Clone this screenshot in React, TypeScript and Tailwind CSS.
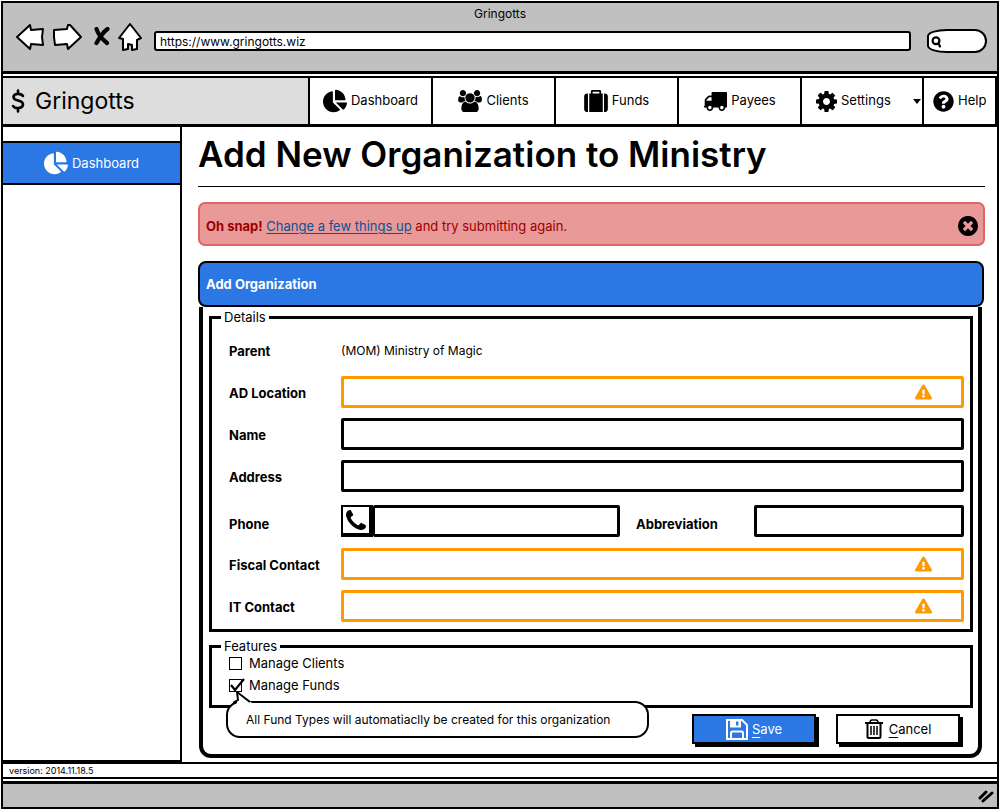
import type { ReactNode } from "react";
import { FaChartPie, FaExclamationTriangle, FaQuestionCircle } from "react-icons/fa";

type IconProps = { className?: string };

const UsersIcon = ({ className }: IconProps) => (
  <svg viewBox="0 0 1920 1792" fill="currentColor" className={className} aria-hidden="true">
    <path d="M593 896q-162 5-265 128h-134q-82 0-138-40.5t-56-118.5q0-353 124-353 6 0 43.5 21t97.5 42.5 119 21.5q67 0 133-23-5 37-5 66 0 159 93 288zm1071 637q0 120-73 189.5t-194 69.5h-874q-121 0-194-69.5t-73-189.5q0-53 3.5-103.5t14-109 26.5-108.5 43-97.5 62-81 85.5-53.5 111.5-20q10 0 43 21.5t73 48 107 48 135 21.5 135-21.5 107-48 73-48 43-21.5q61 0 111.5 20t85.5 53.5 62 81 43 97.5 26.5 108.5 14 109 3.5 103.5zm-1024-1277q0 106-75 181t-181 75-181-75-75-181 75-181 181-75 181 75 75 181zm704 384q0 159-112.5 271.5t-271.5 112.5-271.5-112.5-112.5-271.5 112.5-271.5 271.5-112.5 271.5 112.5 112.5 271.5zm576 225q0 78-56 118.5t-138 40.5h-134q-103-123-265-128 93-129 93-288 0-29-5-66 66 23 133 23 59 0 119-21.5t97.5-42.5 43.5-21q124 0 124 353zm-128-609q0 106-75 181t-181 75-181-75-75-181 75-181 181-75 181 75 75 181z" />
  </svg>
);

const SuitcaseIcon = ({ className }: IconProps) => (
  <svg viewBox="0 0 1792 1664" fill="currentColor" className={className} aria-hidden="true">
    <path d="M640 256h512v-128h-512v128zm-352 0v1408h-64q-92 0-158-66t-66-158v-960q0-92 66-158t158-66h64zm1120 0v1408h-1024v-1408h128v-160q0-40 28-68t68-28h576q40 0 68 28t28 68v160h128zm384 224v960q0 92-66 158t-158 66h-64v-1408h64q92 0 158 66t66 158z" />
  </svg>
);

const TruckIcon = ({ className }: IconProps) => (
  <svg viewBox="0 256 1792 1408" fill="currentColor" className={className} aria-hidden="true">
    <path d="M640 1408q0-52-38-90t-90-38-90 38-38 90 38 90 90 38 90-38 38-90zm-384-512h384v-256h-158q-13 0-22 9l-195 195q-9 9-9 22v30zm1280 512q0-52-38-90t-90-38-90 38-38 90 38 90 90 38 90-38 38-90zm256-1088v1024q0 15-4 26.5t-13.5 18.5-16.5 11.5-23.5 6-22.5 2-25.5 0-22.5-.5q0 106-75 181t-181 75-181-75-75-181h-384q0 106-75 181t-181 75-181-75-75-181h-64q-3 0-22.5.5t-25.5 0-22.5-2-23.5-6-16.5-11.5-13.5-18.5-4-26.5q0-26 19-45t45-19v-320q0-8-.5-35t0-38 2.5-34.5 6.5-37 14-30.5 22.5-30l198-198q19-19 50.5-32t58.5-13h160v-192q0-26 19-45t45-19h1024q26 0 45 19t19 45z" />
  </svg>
);

const CogIcon = ({ className }: IconProps) => (
  <svg viewBox="128 128 1536 1536" fill="currentColor" className={className} aria-hidden="true">
    <path d="M1152 896q0-106-75-181t-181-75-181 75-75 181 75 181 181 75 181-75 75-181zm512-109v222q0 12-8 23t-20 13l-185 28q-19 54-39 91 35 50 107 138 10 12 10 25t-9 23q-27 37-99 108t-94 71q-12 0-26-9l-138-108q-44 23-91 38-16 136-29 186-7 28-36 28h-222q-14 0-24.5-8.5t-11.5-21.5l-28-184q-49-16-90-37l-141 107q-10 9-25 9-14 0-25-11-126-114-165-168-7-10-7-23 0-12 8-23 15-21 51-66.5t54-70.5q-27-50-41-99l-183-27q-13-2-21-12.5t-8-23.5v-222q0-12 8-23t19-13l186-28q14-46 39-92-40-57-107-138-10-12-10-24 0-10 9-23 26-36 98.5-107.5t94.5-71.5q13 0 26 10l138 107q44-23 91-38 16-136 29-186 7-28 36-28h222q14 0 24.5 8.5t11.5 21.5l28 184q49 16 90 37l142-107q9-9 24-9 13 0 25 10 129 119 165 170 7 8 7 22 0 12-8 23-15 21-51 66.5t-54 70.5q26 50 41 98l183 28q13 2 21 12.5t8 23.5z" />
  </svg>
);

const CloseIcon = ({ className }: IconProps) => (
  <svg viewBox="128 128 1536 1536" fill="currentColor" className={className} aria-hidden="true">
    <path d="M1277 1122q0-26-19-45l-181-181 181-181q19-19 19-45 0-27-19-46l-90-90q-19-19-46-19-26 0-45 19l-181 181-181-181q-19-19-45-19-27 0-46 19l-90 90q-19 19-19 46 0 26 19 45l181 181-181 181q-19 19-19 45 0 27 19 46l90 90q19 19 46 19 26 0 45-19l181-181 181 181q19 19 45 19 27 0 46-19l90-90q19-19 19-46zm387-226q0 209-103 385.5t-279.5 279.5-385.5 103-385.5-103-279.5-279.5-103-385.5 103-385.5 279.5-279.5 385.5-103 385.5 103 279.5 279.5 103 385.5z" />
  </svg>
);

const PhoneIcon = ({ className }: IconProps) => (
  <svg viewBox="0 0 1408 1408" fill="currentColor" className={className} aria-hidden="true">
    <path d="M1408 1112q0 27-10 70.5t-21 68.5q-21 50-122 106-94 51-186 51-27 0-52.5-3.5t-57.5-12.5-47.5-14.5-55.5-20.5-49-18q-98-35-175-83-128-79-264.5-215.5t-215.5-264.5q-48-77-83-175-3-9-18-49t-20.5-55.5-14.5-47.5-12.5-57.5-3.5-52.5q0-92 51-186 56-101 106-122 25-11 68.5-21t70.5-10q14 0 21 3 18 6 53 76 11 19 30 54t35 63.5 31 53.5q3 4 17.5 25t21.5 35.5 7 28.5q0 20-28.5 50t-62 55-62 53-28.5 46q0 9 5 22.5t8.5 20.5 14 24 11.5 19q76 137 174 235t235 174q2 1 19 11.5t24 14 20.5 8.5 22.5 5q18 0 46-28.5t53-62 55-62 50-28.5q14 0 28.5 7t35.5 21.5 25 17.5q25 15 53.5 31t63.5 35 54 30q70 35 76 53 3 7 3 21z" />
  </svg>
);

const SaveIcon = ({ className }: IconProps) => (
  <svg viewBox="0 0 22 21" fill="none" stroke="currentColor" strokeWidth="2" className={className} aria-hidden="true">
    <path d="M1 1H16L21 6V20H1Z" />
    <path d="M5 20V14Q5 12.500 6.500 12.500H15.500Q17 12.500 17 14V20" />
    <path d="M4 1V8.500H15V1Z" fill="currentColor" stroke="none" />
    <path d="M10 2.500H12.500V6.500H10Z" fill="#2b78e4" stroke="none" />
  </svg>
);

const TrashIcon = ({ className }: IconProps) => (
  <svg viewBox="0 0 18 20" fill="none" stroke="currentColor" strokeWidth="2" strokeLinejoin="round" className={className} aria-hidden="true">
    <path d="M0 4H18" />
    <path d="M5 4C5 2 6 1 7 1H11C12 1 13 2 13 4" strokeWidth="1.600" />
    <path d="M2.500 4V17.500Q2.500 19 4 19H14Q15.500 19 15.500 17.500V4" />
    <path d="M6 7V16M9 7V16M12 7V16" strokeWidth="1.500" />
  </svg>
);

const BrowserButton = ({ label, children }: { label: string; children: ReactNode }) => (
  <button type="button" aria-label={label} className="flex items-center">
    {children}
  </button>
);

const NavItem = ({ icon, children }: { icon: ReactNode; children: ReactNode }) => (
  <a href="#" className="flex w-[123px] items-center justify-center gap-1 border-l-2 border-black bg-white">
    {icon}
    <span className="pb-[2px]">{children}</span>
  </a>
);

const FieldLabel = ({ id, children }: { id: string; children: ReactNode }) => (
  <label htmlFor={id} className="w-28 shrink-0 pt-[2px] font-bold">
    {children}
  </label>
);

const Field = ({ id, label, warn }: { id: string; label: string; warn?: boolean }) => (
  <div className="flex items-center">
    <FieldLabel id={id}>{label}</FieldLabel>
    {warn ? (
      <div className="relative flex flex-1">
        <input id={id} type="text" className="h-8 w-full rounded-[2px] border-[3px] border-[#ff9900] bg-white px-2 outline-none" />
        <FaExclamationTriangle className="absolute top-2 right-8 h-4 w-[17px] text-[#ff9900]" aria-hidden="true" />
      </div>
    ) : (
      <input id={id} type="text" className="h-8 min-w-0 flex-1 rounded-[2px] border-[3px] border-black bg-white px-2 outline-none" />
    )}
  </div>
);

const Check = ({ id, label, checked }: { id: string; label: string; checked?: boolean }) => (
  <div className="flex h-4 items-center gap-[7px]">
    <span className="relative flex">
      <input id={id} type="checkbox" defaultChecked={checked} className="peer size-[13px] appearance-none border border-black bg-white" />
      <svg viewBox="0 0 15 14" className="pointer-events-none absolute top-[-1px] left-px hidden h-3.5 w-[15px] peer-checked:block" fill="none" stroke="black" strokeWidth="2.200" aria-hidden="true">
        <path d="M1 7L5 12L14 1" />
      </svg>
    </span>
    <label htmlFor={id}>{label}</label>
  </div>
);

export default function App() {
  return (
    <div className="flex min-h-screen flex-col bg-white p-px font-['Inter','Liberation_Sans',sans-serif] text-[13px] leading-4 text-black">
      <div className="flex flex-1 flex-col border-2 border-black">
        <header className="border-b-[3px] border-black bg-[#c0c0c0] pb-5">
          <div className="pt-[3px] text-center text-xs">Gringotts</div>
          <div className="mt-px flex h-7 items-center pr-2.5 pl-[13px]">
            <BrowserButton label="Back">
              <svg viewBox="0 0 28 26" className="h-[26px] w-7" fill="white" stroke="black" strokeWidth="2" strokeLinejoin="round">
                <path d="M1 13L14 1L15 6L27 5L26 13L27 21L15 20L14 25Z" />
              </svg>
            </BrowserButton>
            <span className="w-2" />
            <BrowserButton label="Forward">
              <svg viewBox="0 0 30 28" className="h-7 w-[30px]" fill="white" stroke="black" strokeWidth="2" strokeLinejoin="round">
                <path d="M2 7L15 6L16 2L18 2L29 14L16 26L15 21L3 22L2 14Z" />
              </svg>
            </BrowserButton>
            <span className="w-[11px]" />
            <BrowserButton label="Stop">
              <svg viewBox="0 0 18 20" className="h-5 w-[18px]" fill="none" stroke="black" strokeWidth="4.200" strokeLinecap="round">
                <path d="M3.500 2C5 7 9 12 14 16M14.500 2C9 6 7 10 3.500 16" />
              </svg>
            </BrowserButton>
            <span className="w-[7px]" />
            <BrowserButton label="Home">
              <svg viewBox="0 0 24 28" className="h-7 w-6" fill="white" stroke="black" strokeWidth="2" strokeLinejoin="round">
                <path d="M12 1L23 15L19 17L19 26L14 27L14 22L10 21L10 26L5 27L5 16L1 15Z" />
              </svg>
            </BrowserButton>
            <input
              type="text"
              aria-label="Address"
              defaultValue="https://www.gringotts.wiz"
              className="mt-2 ml-3 h-5 min-w-0 flex-1 rounded-[3px] border-2 border-black bg-white px-1 text-xs outline-none"
            />
            <div className="relative mt-2 ml-4 flex w-[60px]">
              <input type="search" aria-label="Search" className="h-6 w-full rounded-[50%/45%] rounded-r-[18px] border-2 border-black bg-white pl-5 outline-none" />
              <svg viewBox="0 0 12 12" className="pointer-events-none absolute top-[7px] left-1 size-3" fill="none" stroke="black" strokeWidth="2.200" strokeLinecap="round" aria-hidden="true">
                <circle cx="5" cy="4.800" r="3.400" />
                <path d="M7.500 7.500L9 10.500" />
              </svg>
            </div>
          </div>
        </header>

        <nav className="mt-[2px] flex h-[51px] border-t-2 border-b-[3px] border-black">
          <div className="flex flex-1 items-center gap-2.5 bg-[#dddddd] pb-px pl-2">
            <svg viewBox="0 0 14 24" className="h-6 w-3.5" fill="none" stroke="black" strokeWidth="2.600" strokeLinecap="round" aria-hidden="true">
              <path d="M12 7C10 4 3 4 2.500 8C2.500 13 12 10 12 15.500C11.500 20 4 20 2 17M7 1.500V4.500M7 19V22.500" />
            </svg>
            <span className="text-[23px] leading-7">Gringotts</span>
          </div>
          <NavItem icon={<FaChartPie className="size-6" />}>Dashboard</NavItem>
          <NavItem icon={<UsersIcon className="h-[22px] w-6" />}>Clients</NavItem>
          <NavItem icon={<SuitcaseIcon className="h-[22px] w-6" />}>Funds</NavItem>
          <NavItem icon={<TruckIcon className="h-[19px] w-6" />}>Payees</NavItem>
          <a href="#" className="flex w-[122px] items-center border-l-2 border-black bg-white pr-px pl-3.5">
            <CogIcon className="size-[21px]" />
            <span className="ml-1 flex-1 pb-[2px]">Settings</span>
            <svg viewBox="0 0 8 5" className="h-[5px] w-2" aria-hidden="true">
              <path d="M0 0H8L4 5Z" />
            </svg>
          </a>
          <a href="#" className="flex w-[75px] items-center gap-1 border-r-2 border-l-2 border-black bg-white pl-[9px]">
            <FaQuestionCircle className="size-[21px]" />
            <span className="pb-[2px]">Help</span>
          </a>
        </nav>

        <div className="flex flex-1">
          <aside className="flex w-[179px] shrink-0 flex-col border-r-2 border-b-2 border-black pt-3.5">
            <a href="#" className="flex h-11 items-center justify-center gap-1 border-y-2 border-black bg-[#2b78e4] pb-px text-white">
              <FaChartPie className="size-6" />
              Dashboard
            </a>
          </aside>

          <main className="flex min-w-0 flex-1 flex-col pr-3 pb-1 pl-4">
            <h1 className="border-b border-black pt-[7px] pb-3 text-[35px] leading-10 font-semibold">Add New Organization to Ministry</h1>

            <div role="alert" className="mt-[15px] flex h-11 items-center rounded-[7px] border-2 border-[#e06666] bg-[#ea9999] pt-1 pr-[5px] pl-1.5 text-[#990000]">
              <p className="flex-1">
                <strong>Oh snap!</strong>{" "}
                <a href="#" className="text-[#0b5394] underline underline-offset-2">
                  Change a few things up
                </a>{" "}
                and try submitting again.
              </p>
              <button type="button" aria-label="Dismiss" className="text-black">
                <CloseIcon className="size-5" />
              </button>
            </div>

            <form className="mt-[15px] mr-px flex flex-1 flex-col">
              <h2 className="flex h-[46px] items-center rounded-lg border-2 border-black bg-[#2b78e4] pl-1.5 font-bold text-white">Add Organization</h2>

              <div className="mr-[2px] ml-px flex flex-1 flex-col rounded-b-xl border-x-4 border-b-4 border-black pt-[2px] pr-[5px] pb-1 pl-1.5">
                <fieldset className="border-[3px] border-black pr-1.5 pb-[7px] pl-[17px]">
                  <legend className="-ml-2 px-[3px]">Details</legend>
                  <div className="flex items-center pt-[18px] pb-[17px]">
                    <span className="w-28 font-bold">Parent</span>
                    <span className="text-xs">(MOM) Ministry of Magic</span>
                  </div>
                  <div className="flex flex-col gap-2.5">
                    <Field id="ad-location" label="AD Location" warn />
                    <Field id="name" label="Name" />
                    <Field id="address" label="Address" />
                    <div className="mt-[3px] mb-px flex items-center">
                      <label htmlFor="phone" className="w-28 shrink-0 pt-1.5 font-bold">
                        Phone
                      </label>
                      <button type="button" aria-label="Call" className="flex h-8 w-8 items-center justify-center border-2 border-r-4 border-b-4 border-black bg-white">
                        <PhoneIcon className="size-5" />
                      </button>
                      <input id="phone" type="tel" className="h-8 min-w-0 flex-1 rounded-[2px] border-[3px] border-l-2 border-black bg-white px-2 outline-none" />
                      <label htmlFor="abbreviation" className="w-[134px] shrink-0 pt-1.5 pl-4 font-bold">
                        Abbreviation
                      </label>
                      <input id="abbreviation" type="text" className="h-8 w-[210px] rounded-[2px] border-[3px] border-black bg-white px-2 outline-none" />
                    </div>
                    <Field id="fiscal-contact" label="Fiscal Contact" warn />
                    <Field id="it-contact" label="IT Contact" warn />
                  </div>
                </fieldset>

                <fieldset className="relative mt-1.5 border-[3px] border-black pb-3 pl-[17px]">
                  <legend className="-ml-2 px-[3px]">Features</legend>
                  <div className="flex flex-col gap-1.5 pt-px">
                    <Check id="manage-clients" label="Manage Clients" />
                    <Check id="manage-funds" label="Manage Funds" checked />
                  </div>
                  <div role="tooltip" className="absolute top-full left-3.5 -mt-1 flex h-[37px] w-[423px] items-center rounded-[14px] border-2 border-black bg-white pl-[18px] text-xs whitespace-nowrap">
                    All Fund Types will automatiaclly be created for this organization
                    <svg viewBox="0 0 24 13" className="absolute -top-[12px] left-[5px] h-[13px] w-6" aria-hidden="true">
                      <path d="M4 12L5 1L19 12V13H3Z" fill="white" />
                      <path d="M0 12L5 9L4 1L17 11" fill="none" stroke="black" strokeWidth="2" strokeLinejoin="round" />
                    </svg>
                  </div>
                </fieldset>

                <div className="mt-1.5 flex justify-end gap-5 pr-[13px]">
                  <button type="submit" className="flex h-[30px] w-[124px] items-center justify-center gap-1 border-2 border-black bg-[#2b78e4] text-white shadow-[3px_3px_0_0_black]">
                    <SaveIcon className="h-[21px] w-[22px]" />
                    <span>
                      <span className="underline underline-offset-3">S</span>ave
                    </span>
                  </button>
                  <button type="button" className="flex h-[30px] w-[124px] items-center justify-center gap-1.5 border-2 border-black bg-white shadow-[3px_3px_0_0_black]">
                    <TrashIcon className="h-5 w-[18px]" />
                    <span>
                      <span className="underline underline-offset-3">C</span>ancel
                    </span>
                  </button>
                </div>
              </div>
            </form>
          </main>
        </div>

        <footer>
          <div className="flex h-[17px] items-center border-y-2 border-black pl-1.5 text-[9px]">version: 2014.11.18.5</div>
          <div className="mt-[2px] flex h-[26px] items-center justify-end border-t-[3px] border-black bg-[#c0c0c0] pr-[3px]">
            <svg viewBox="0 0 16 14" className="h-3.5 w-4" fill="none" stroke="black" strokeWidth="3" strokeLinecap="round" aria-hidden="true">
              <path d="M2 9L8 3M5 12L14 4" />
            </svg>
          </div>
        </footer>
      </div>
    </div>
  );
}
